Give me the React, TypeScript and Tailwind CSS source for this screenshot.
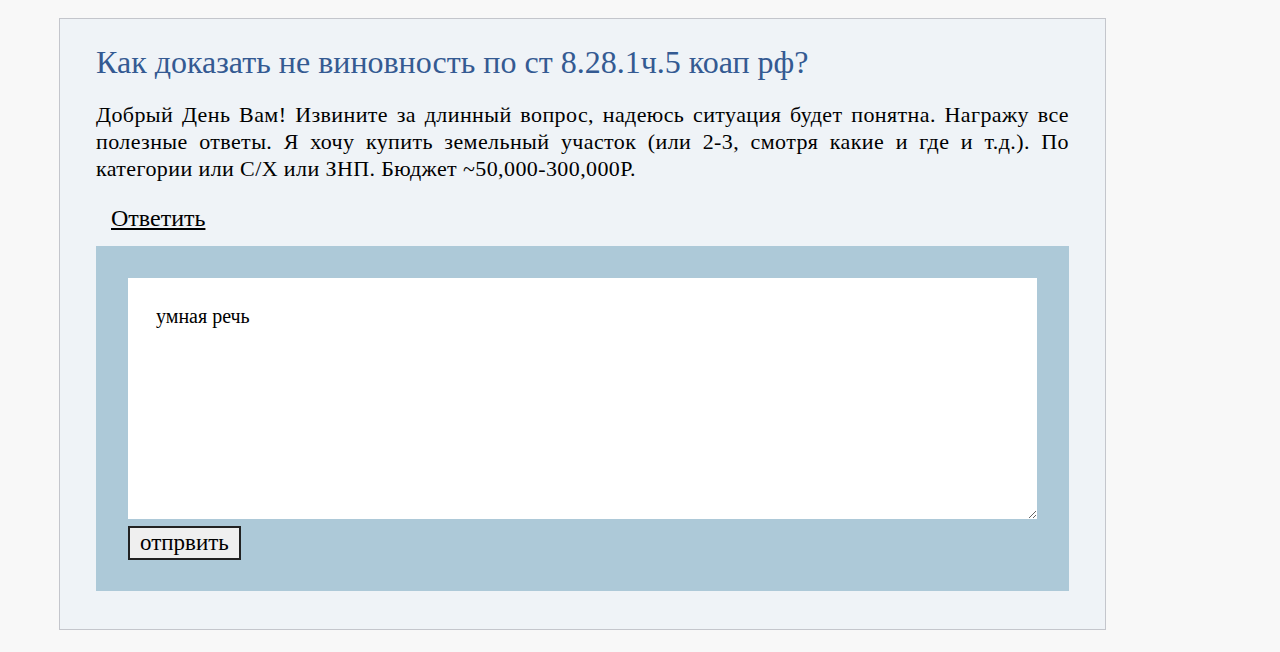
export default function App() {
  return (
    <div className="min-h-[652px] w-full bg-[#f8f8f8] pt-[18px] font-['Liberation_Serif',serif]">
      <div className="ml-[59px] w-[1047px] h-[612px] border border-[#c4c6cc] bg-[#eff3f7] pl-[36px] pr-[36px] pt-[23px]">
        <h1 className="text-[32px] leading-[40px] text-[#345a92]">
          Как доказать не виновность по ст 8.28.1ч.5 коап рф?
        </h1>
        <p className="mt-[19px] text-[22px] leading-[27px] tracking-[0.4px] text-black text-justify">
          Добрый День Вам! Извините за длинный вопрос, надеюсь ситуация будет понятна. Награжу все полезные ответы. Я хочу купить земельный участок (или 2-3, смотря какие и где и т.д.). По категории или С/Х или ЗНП. Бюджет ~50,000-300,000Р.
        </p>
        <div className="mt-[23px] pl-[15px]">
          <a href="#" className="text-[24px] leading-[27px] text-black underline">
            Ответить
          </a>
        </div>
        <div className="mt-[13px] h-[345px] bg-[#adc9d8] p-[32px]">
          <textarea
            className="block w-full h-[241px] bg-white px-[28px] py-[26px] text-[20px] leading-[24px] text-black outline-none resize-y font-['Liberation_Serif',serif]"
            defaultValue="умная речь"
          />
          <button className="mt-[7px] h-[34px] px-[10px] border-2 border-[#222] bg-[#efefef] text-[23px] leading-[28px] text-black font-['Liberation_Serif',serif]">
            отпрвить
          </button>
        </div>
      </div>
    </div>
  );
}
